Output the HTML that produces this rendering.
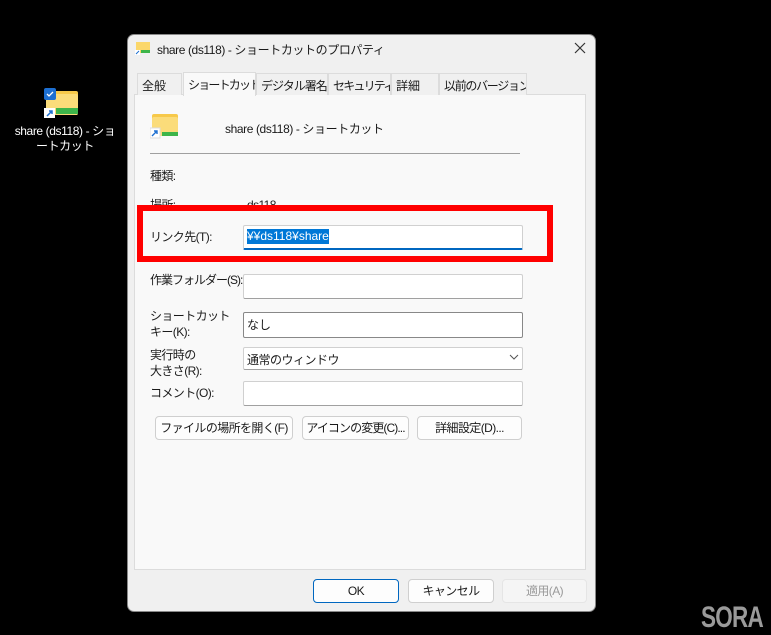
<!DOCTYPE html>
<html><head><meta charset="utf-8"><style>
*{margin:0;padding:0;box-sizing:border-box}
body{width:771px;height:635px;background:#000;position:relative;overflow:hidden;font-family:"Liberation Sans","Noto Sans CJK JP",sans-serif;font-size:12px;color:#1a1a1a}
.a{position:absolute;white-space:nowrap}
.dlg{left:127px;top:34px;width:469px;height:578px;background:#f0f0f0;border-radius:7px;border:1px solid #888}
.panel{left:134px;top:94px;width:452px;height:476px;background:#f9f9f9;border:1px solid #dcdcdc}
.tab{top:73px;height:22px;border:1px solid #dcdcdc;border-bottom:none;background:#f0f0f0;font-size:12px;padding:3px 0 0 4px;letter-spacing:-1.8px;overflow:hidden}
.inp{background:#fff;border:1px solid #d0d0d0;border-bottom-color:#a0a0a0;border-radius:2px}
.btn{background:#fdfdfd;border:1px solid #cfcfcf;border-radius:4px;text-align:center;font-size:12px;line-height:22px;letter-spacing:-0.6px;overflow:hidden}
.lbl{font-size:12px;line-height:16px;letter-spacing:-0.6px}
</style></head><body>
<div class="a" style="left:44px;top:88px;width:36px;height:30px">
<svg width="36" height="30"><rect x="2" y="3" width="32" height="24" rx="2" fill="#f7c94a"/><rect x="2" y="6" width="32" height="21" rx="2" fill="#fbdc7a"/><rect x="12" y="20" width="22" height="6" fill="#3db54a"/><rect x="0" y="0" width="12" height="12" rx="2" fill="#1d6fd1"/><path d="M3 6l2 2 4-4" stroke="#fff" stroke-width="1.3" fill="none"/><rect x="0" y="20" width="11" height="10" fill="#fff"/><path d="M3 28l5-5M5 23h3v3" stroke="#1d6fd1" stroke-width="1.5" fill="none"/></svg></div>
<div class="a" style="left:10px;top:124px;width:110px;text-align:center;color:#fff;font-size:12px;line-height:15px;letter-spacing:-0.4px">share (ds118) - ショ<br>ートカット</div>
<div class="a" style="left:701px;top:601px;color:#9a9a9a;font-weight:bold;font-size:30px;letter-spacing:-1px;transform:scaleX(0.75);transform-origin:left">SORA</div>

<div class="a dlg"></div>
<svg class="a" style="left:135px;top:40px" width="16" height="16"><rect x="1" y="2" width="14" height="11" fill="#fbd76a"/><rect x="6" y="10" width="9" height="3" fill="#3db54a"/><rect x="0" y="10" width="5" height="5" fill="#fff"/><path d="M1 14l3-3" stroke="#1d6fd1"/></svg>
<div class="a" style="left:157px;top:41px;font-size:12px;letter-spacing:-0.4px">share (ds118) - ショートカットのプロパティ</div>
<svg class="a" style="left:574px;top:42px" width="12" height="12"><path d="M1 1l10 10M11 1L1 11" stroke="#333" stroke-width="1.2"/></svg>

<div class="a panel"></div>
<div class="a tab" style="left:137px;width:45px;letter-spacing:0">全般</div>
<div class="a tab" style="left:183px;width:73px;top:72px;height:24px;background:#f9f9f9">ショートカット</div>
<div class="a tab" style="left:256px;width:72px;letter-spacing:-1px">デジタル署名</div>
<div class="a tab" style="left:328px;width:63px">セキュリティ</div>
<div class="a tab" style="left:391px;width:48px;letter-spacing:0">詳細</div>
<div class="a tab" style="left:439px;width:88px;letter-spacing:-1.3px">以前のバージョン</div>

<svg class="a" style="left:150px;top:112px" width="30" height="28"><rect x="2" y="2" width="26" height="22" rx="2" fill="#f7c94a"/><rect x="2" y="5" width="26" height="19" rx="2" fill="#fbdc7a"/><rect x="12" y="20" width="16" height="4" fill="#3db54a"/><rect x="0" y="16" width="10" height="10" fill="#fff" stroke="#ddd"/><path d="M2 24l5-5M4 19h3v3" stroke="#1d6fd1" stroke-width="1.4" fill="none"/></svg>
<div class="a" style="left:225px;top:120px;letter-spacing:-0.4px">share (ds118) - ショートカット</div>
<div class="a" style="left:150px;top:153px;width:370px;height:1px;background:#a0a0a0"></div>
<div class="a lbl" style="left:150px;top:168px">種類:</div>
<div class="a lbl" style="left:150px;top:197px">場所:</div>
<div class="a lbl" style="left:247px;top:197px">ds118</div>

<div class="a" style="left:137px;top:205px;width:416px;height:57px;border:6px solid #ff0000;background:#f9f9f9"></div>
<div class="a lbl" style="left:150px;top:229px">リンク先(T):</div>
<div class="a inp" style="left:243px;top:225px;width:280px;height:25px;border-bottom:2px solid #0067c0"></div>
<div class="a" style="left:247px;top:229px;background:#0078d7;color:#fff;font-size:12px;line-height:15px">¥¥ds118¥share</div>

<div class="a lbl" style="left:150px;top:272px;letter-spacing:-1px">作業フォルダー(S):</div>
<div class="a inp" style="left:243px;top:274px;width:280px;height:25px"></div>
<div class="a lbl" style="left:150px;top:308px">ショートカット<br>キー(K):</div>
<div class="a inp" style="left:243px;top:312px;width:280px;height:26px;border-color:#888"></div>
<div class="a" style="left:247px;top:316px">なし</div>
<div class="a lbl" style="left:150px;top:347px">実行時の<br>大きさ(R):</div>
<div class="a inp" style="left:243px;top:347px;width:280px;height:23px"></div>
<div class="a" style="left:247px;top:351px;letter-spacing:-0.5px">通常のウィンドウ</div>
<svg class="a" style="left:509px;top:354px" width="10" height="6"><path d="M1 1l4 4 4-4" stroke="#555" fill="none"/></svg>
<div class="a lbl" style="left:150px;top:385px">コメント(O):</div>
<div class="a inp" style="left:243px;top:381px;width:280px;height:25px"></div>

<div class="a btn" style="left:155px;top:416px;width:138px;height:24px">ファイルの場所を開く(F)</div>
<div class="a btn" style="left:302px;top:416px;width:107px;height:24px;letter-spacing:-0.9px">アイコンの変更(C)...</div>
<div class="a btn" style="left:417px;top:416px;width:105px;height:24px">詳細設定(D)...</div>

<div class="a btn" style="left:313px;top:579px;width:86px;height:24px;border-color:#0067c0">OK</div>
<div class="a btn" style="left:408px;top:579px;width:86px;height:24px">キャンセル</div>
<div class="a btn" style="left:502px;top:579px;width:85px;height:24px;background:#f5f5f5;border-color:#e5e5e5;color:#9a9a9a">適用(A)</div>
</body></html>
